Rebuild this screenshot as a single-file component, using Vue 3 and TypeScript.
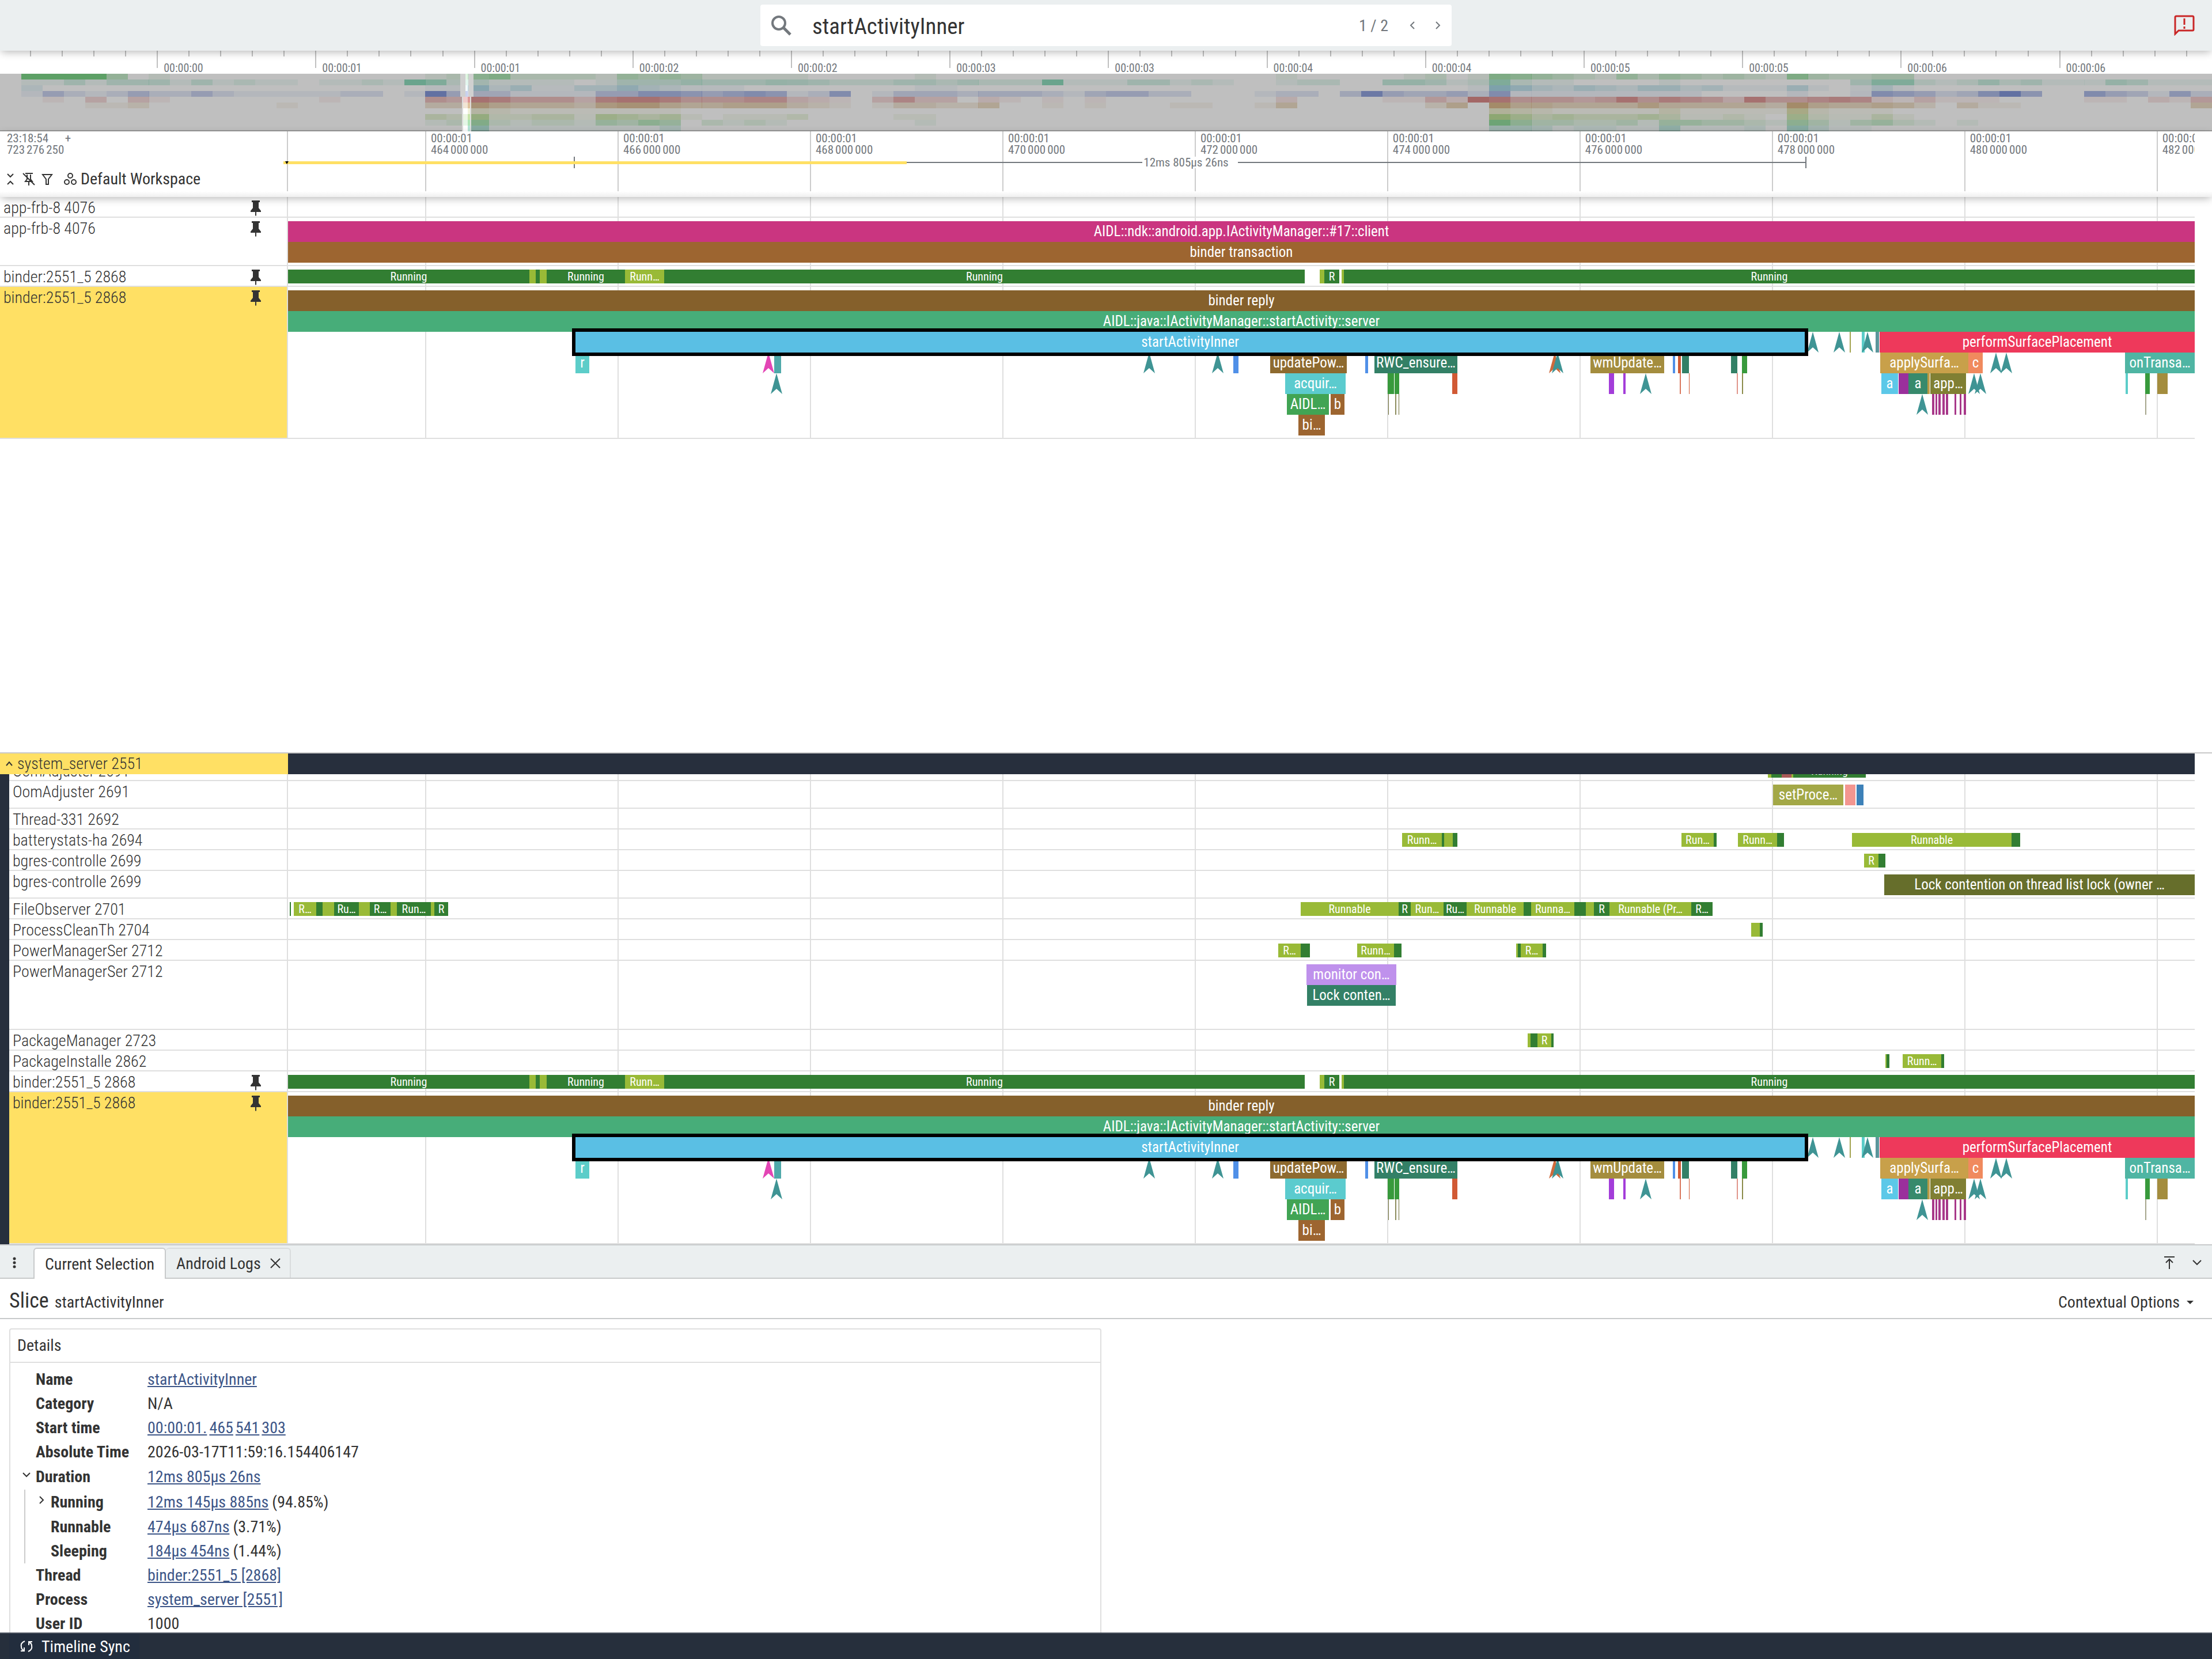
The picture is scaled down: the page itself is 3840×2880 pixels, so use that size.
<script setup lang="ts">
type Kind = 'slice' | 'mark'
interface Slice {
  from: number
  to: number
  color: string
  text?: string
  depth?: number
  kind?: Kind
  selected?: boolean
}
interface Track {
  name: string
  height: number
  state?: boolean
  pinned?: boolean
  selected?: boolean
  slices: Slice[]
}

const LANE_START = 500
const LANE_END = 3810
const lanePct = (x: number): string => ((x - LANE_START) / (LANE_END - LANE_START)) * 100 + '%'
const laneWidth = (w: number): string => (w / (LANE_END - LANE_START)) * 100 + '%'
const pagePct = (x: number): string => (x / 3840) * 100 + '%'

const GREEN = '#327e32'
const LIME = '#99ba37'
const TEAL = '#3f9494'
const BROWN = '#9d6530'
const CYAN = '#5ccdc9'
const FOREST = '#338066'
const LEAF = '#389a3c'
const BLUE = '#5090e8'
const RUST = '#d15a35'

const run = (from: number, to: number, text = ''): Slice => ({ from, to, color: GREEN, text })
const ready = (from: number, to: number, text = ''): Slice => ({ from, to, color: LIME, text })
const bar = (depth: number, from: number, to: number, color: string, text = ''): Slice => ({ depth, from, to, color, text })
const mark = (depth: number, center: number, color = TEAL): Slice => ({ depth, from: center - 10, to: center + 10, color, kind: 'mark' })

const binderStates: Slice[] = [
  run(500, 919, 'Running'), ready(919, 930), run(930, 937), ready(937, 949), run(949, 1085, 'Running'),
  ready(1085, 1153, 'Runn…'), run(1153, 2265, 'Running'), ready(2291, 2299), run(2299, 2325, 'R'),
  ready(2329, 2333), run(2333, 3810, 'Running'),
]

const magenta = [[3354, 4], [3360, 3], [3365, 4], [3372, 4], [3378, 4], [3393, 3], [3402, 3], [3409, 4]]

const binderSlices: Slice[] = [
  bar(0, 500, 3810, '#85602b', 'binder reply'),
  bar(1, 500, 3810, '#47ad79', 'AIDL::java::IActivityManager::startActivity::server'),
  { depth: 2, from: 999, to: 3133, color: '#5abfe4', text: 'startActivityInner', selected: true },
  mark(2, 3147), mark(2, 3193), bar(2, 3211, 3213, '#a3a34f'), bar(2, 3232, 3237, CYAN), mark(2, 3242),
  bar(2, 3256, 3262, '#5b959b'), bar(2, 3263, 3810, '#ee395b', 'performSurfacePlacement'),
  bar(3, 999, 1023, CYAN, 'r'), mark(3, 1334, '#e345b5'), bar(3, 1344, 1356, '#4fa9aa'), mark(4, 1348),
  mark(3, 1995), mark(3, 2114), bar(3, 2141, 2150, BLUE), bar(3, 2205, 2338, '#8e6a2f', 'updatePow…'),
  bar(3, 2370, 2375, BLUE), bar(3, 2386, 2530, FOREST, 'RWC_ensure…'),
  bar(4, 2231, 2336, '#5bcbce', 'acquir…'), bar(4, 2409, 2420, LEAF), bar(4, 2421, 2429, LEAF), bar(4, 2521, 2530, RUST),
  bar(5, 2234, 2307, '#41a454', 'AIDL…'), bar(5, 2310, 2334, BROWN, 'b'),
  bar(5, 2410, 2411, '#6b6b32'), bar(5, 2422, 2424, '#8c8c5c'), bar(5, 2428, 2429, '#6b6b32'),
  bar(6, 2254, 2300, BROWN, 'bi…'),
  mark(3, 2699, '#cf6a3c'), mark(3, 2704), bar(3, 2761, 2889, '#a48d3e', 'wmUpdate…'), bar(3, 2904, 2908, BLUE),
  bar(3, 2913, 2918, RUST), bar(3, 2920, 2932, FOREST), bar(3, 3005, 3016, FOREST), bar(3, 3024, 3033, LEAF),
  bar(3, 3264, 3417, '#c8a04a', 'applySurfa…'), bar(3, 3417, 3442, '#f08a5e', 'c'), mark(3, 3465), mark(3, 3483),
  bar(3, 3689, 3810, '#4fb5a3', 'onTransa…'),
  bar(4, 2793, 2802, '#a33dd9'), bar(4, 2818, 2822, '#a33dd9'), mark(4, 2857), bar(4, 2916, 2918, '#d9775c'),
  bar(4, 2932, 2933, RUST), bar(4, 3015, 3017, '#e0958a'), bar(4, 3024, 3026, '#8c8c4a'),
  bar(4, 3266, 3295, '#5cc8e8', 'a'), bar(4, 3296, 3313, '#9a309c'), bar(4, 3313, 3346, '#378a6c', 'a'),
  bar(4, 3346, 3350, '#b89b45'), bar(4, 3351, 3413, '#807f33', 'app…'), mark(4, 3427), mark(4, 3438),
  bar(4, 3690, 3694, CYAN), bar(4, 3724, 3732, LEAF), bar(4, 3745, 3763, '#a48d3e'),
  mark(5, 3337), bar(5, 3724, 3726, '#a5a58c'),
  ...magenta.map(([x, w]) => bar(5, x, x + w, '#a8388a')),
]

const pinnedTracks: Track[] = [
  { name: 'app-frb-8 4076', height: 36, state: true, pinned: true, slices: [] },
  {
    name: 'app-frb-8 4076', height: 84, pinned: true,
    slices: [
      bar(0, 500, 3810, '#ca3580', 'AIDL::ndk::android.app.IActivityManager::#17::client'),
      bar(1, 500, 3810, BROWN, 'binder transaction'),
    ],
  },
  { name: 'binder:2551_5 2868', height: 36, state: true, pinned: true, slices: binderStates },
  { name: 'binder:2551_5 2868', height: 264, pinned: true, selected: true, slices: binderSlices },
]

const serverTracks: Track[] = [
  {
    name: 'OomAdjuster 2691', height: 36, state: true,
    slices: [ready(3069, 3075), run(3075, 3093), { from: 3093, to: 3110, color: '#a85a58' }, ready(3110, 3113), run(3113, 3239, 'Running')],
  },
  {
    name: 'OomAdjuster 2691', height: 48,
    slices: [bar(0, 3078, 3200, '#a3a847', 'setProce…'), bar(0, 3203, 3221, '#f39690'), bar(0, 3223, 3235, '#3d81b8')],
  },
  { name: 'Thread-331 2692', height: 36, state: true, slices: [] },
  {
    name: 'batterystats-ha 2694', height: 36, state: true,
    slices: [
      ready(2434, 2503, 'Runn…'), run(2503, 2507), ready(2507, 2522), run(2522, 2530), ready(2919, 2975, 'Run…'), run(2975, 2980),
      ready(3017, 3085, 'Runn…'), run(3085, 3097), ready(3215, 3492, 'Runnable'), run(3492, 3507),
    ],
  },
  { name: 'bgres-controlle 2699', height: 36, state: true, slices: [ready(3236, 3261, 'R'), run(3261, 3273)] },
  { name: 'bgres-controlle 2699', height: 48, slices: [bar(0, 3271, 3810, '#666e2b', 'Lock contention on thread list lock (owner …')] },
  {
    name: 'FileObserver 2701', height: 36, state: true,
    slices: [
      run(503, 505), ready(510, 549, 'R…'), run(549, 560), ready(560, 580), run(580, 623, 'Ru…'), ready(623, 642), run(642, 678, 'R…'),
      ready(678, 689), run(689, 748, 'Run…'), ready(748, 754), run(754, 778, 'R'), ready(2258, 2428, 'Runnable'), run(2428, 2449, 'R'),
      ready(2449, 2506, 'Run…'), run(2506, 2546, 'Ru…'), ready(2546, 2645, 'Runnable'), run(2645, 2658), ready(2658, 2733, 'Runna…'),
      run(2733, 2753), ready(2753, 2767), run(2767, 2794, 'R'), ready(2794, 2936, 'Runnable (Pr…'), run(2936, 2973, 'R…'),
    ],
  },
  { name: 'ProcessCleanTh 2704', height: 36, state: true, slices: [ready(3040, 3055), run(3055, 3060)] },
  {
    name: 'PowerManagerSer 2712', height: 36, state: true,
    slices: [
      ready(2219, 2258, 'R…'), run(2258, 2274), ready(2356, 2420, 'Runn…'), run(2420, 2433), ready(2632, 2635), run(2635, 2640),
      ready(2640, 2678, 'R…'), run(2678, 2684),
    ],
  },
  {
    name: 'PowerManagerSer 2712', height: 120,
    slices: [bar(0, 2268, 2424, '#bf91ec', 'monitor con…'), bar(1, 2269, 2423, FOREST, 'Lock conten…')],
  },
  { name: 'PackageManager 2723', height: 36, state: true, slices: [ready(2652, 2657), run(2657, 2669), ready(2669, 2693, 'R'), run(2693, 2697)] },
  { name: 'PackageInstalle 2862', height: 36, state: true, slices: [ready(3273, 3275), run(3275, 3280), ready(3303, 3370, 'Runn…'), run(3370, 3375)] },
  { name: 'binder:2551_5 2868', height: 36, state: true, pinned: true, slices: binderStates },
  { name: 'binder:2551_5 2868', height: 264, pinned: true, selected: true, slices: binderSlices },
]

const panels = [
  { id: 'pinned', tracks: pinnedTracks },
  { id: 'server', tracks: serverTracks },
]

const sliceStyle = (s: Slice, state?: boolean) => ({
  left: lanePct(s.from),
  width: laneWidth(s.to - s.from),
  top: state ? undefined : 6 + (s.depth ?? 0) * 36 + 'px',
  background: s.color,
})

const gridX = Array.from({ length: 10 }, (_, i) => 738 + i * 333.97)
const gridLabels = gridX.map((x, i) => ({ x, ms: String(464 + i * 2) }))

const seconds = ['00', '01', '01', '02', '02', '03', '03', '04', '04', '05', '05', '06', '06']
const overviewTicks = Array.from({ length: 69 }, (_, i) => ({
  x: 52 + i * 55.04,
  label: i % 5 === 4 ? '00:00:' + seconds[(i - 4) / 5] : '',
}))

// CPU load per process row. Each entry is "bucket:levels", one digit from 0 to 9 for each following bucket.
const loadRows: { color: string; load: string }[] = [
  { color: '#7cd688', load: '1:99994 7:1 20:12 22:5622221434311111 43:1 60:1 66:12 69:16543214243232163223 89:3' },
  { color: '#80d6b4', load: '1:1131333131211011218621 22:2111101333433343 37:1322233232228111331210 60:12200443126211 78:1 87:3662124231114311141' },
  { color: '#90cbdc', load: '1:2 20:11 22:6241133532111 43:11 69:175324324423111410131' },
  { color: '#8397d9', load: '1:142124 7:2242111112201 20:94331111 28:4466545651260133323332134422 59:122038433426 71:1111111110 84:1 87:165423695 98:643152' },
  { color: '#da8a89', load: '2:1 4:3 6:31 15:1 20:54 22:87555378875556632103633 46:21 49:1 51:1 60:2 65:11429855545857653855676213111 98:11021 103:4' },
  { color: '#d6b17f', load: '4:112 13:1 20:33 22:7544436775445553210133224 49:1 51:1 55:11 59:14 67:25 70:8554444644444385445420311 103:4' },
  { color: '#d2d48c', load: '22:321111111 31:1 70:4321111131111162111' },
  { color: '#aad67c', load: '20:326223315434101112 42:11 70:753433343112 82:1 84:52113 89:1' },
  { color: '#84d690', load: '20:12621221435402121 43:1 70:85332231443321531342101' },
  { color: '#90d6c4', load: '22:6111111113 70:443122115111206311' },
]
const loadCells = loadRows.map((row) => ({
  color: row.color,
  cells: row.load.split(' ').flatMap((entry) => {
    const [start, levels] = entry.split(':')
    return [...levels].map((d, k) => ({ i: Number(start) + k, alpha: Number(d) / 9 })).filter((c) => c.alpha > 0)
  }),
}))

interface Detail {
  label: string
  parts?: string[]
  plain?: string
  level?: number
  toggle?: 'open' | 'closed'
}
const details: Detail[] = [
  { label: 'Name', parts: ['startActivityInner'] },
  { label: 'Category', plain: 'N/A' },
  { label: 'Start time', parts: ['00:00:01.', '465', '541', '303'] },
  { label: 'Absolute Time', plain: '2026-03-17T11:59:16.154406147' },
  { label: 'Duration', parts: ['12ms 805µs 26ns'], toggle: 'open' },
  { label: 'Running', parts: ['12ms 145µs 885ns'], plain: '(94.85%)', level: 1, toggle: 'closed' },
  { label: 'Runnable', parts: ['474µs 687ns'], plain: '(3.71%)', level: 1 },
  { label: 'Sleeping', parts: ['184µs 454ns'], plain: '(1.44%)', level: 1 },
  { label: 'Thread', parts: ['binder:2551_5 [2868]'] },
  { label: 'Process', parts: ['system_server [2551]'] },
  { label: 'User ID', plain: '1000' },
]
</script>

<template>
  <div class="app">
    <header class="topbar">
      <label class="omnibox">
        <svg class="search" viewBox="0 0 36 36"><circle cx="14" cy="14" r="11" fill="none" stroke="currentColor" stroke-width="4" /><path d="M21 21 34 34" stroke="currentColor" stroke-width="5" /></svg>
        <input class="query" type="text" value="startActivityInner" aria-label="Search" />
        <span class="hits">1 / 2</span>
        <button class="step" type="button" aria-label="Previous result"><svg viewBox="0 0 14 18"><path d="M10 3 4 9l6 6" /></svg></button>
        <button class="step" type="button" aria-label="Next result"><svg viewBox="0 0 14 18"><path d="m4 3 6 6-6 6" /></svg></button>
      </label>
      <button class="alert" type="button" aria-label="Errors">
        <svg viewBox="0 0 36 36"><path d="M2 33V4q0-2 2-2h28q2 0 2 2v21q0 2-2 2H8Z" fill="none" stroke="#c92626" stroke-width="3" /><path d="M18 6v11M18 20v4" stroke="#c92626" stroke-width="3" /></svg>
      </button>
    </header>

    <section class="overview">
      <div class="ruler">
        <div v-for="t in overviewTicks" :key="t.x" class="tick" :class="{ major: t.label }" :style="{ left: pagePct(t.x) }">
          <span v-if="t.label">{{ t.label }}</span>
        </div>
      </div>
      <div class="minimap">
        <div v-for="row in loadCells" :key="row.color" class="load">
          <i v-for="c in row.cells" :key="c.i" :style="{ left: pagePct(c.i * 36.923), background: row.color, opacity: c.alpha }"></i>
        </div>
        <div class="shade" :style="{ left: '0', width: pagePct(803) }"></div>
        <div class="shade" :style="{ left: pagePct(818), right: '0' }"></div>
        <div class="handle" :style="{ left: pagePct(799) }"></div>
        <div class="handle" :style="{ left: pagePct(813) }"></div>
        <div class="rim" :style="{ left: pagePct(802) }"></div>
        <div class="rim" :style="{ left: pagePct(816) }"></div>
      </div>
    </section>

    <section class="axis">
      <div class="corner">
        <div class="stamp">
          <p>23:18:54 <b>+</b></p>
          <p class="nanos"><span>723</span><span>276</span><span>250</span></p>
        </div>
        <div class="tools">
          <button type="button" aria-label="Collapse all"><svg viewBox="0 0 24 24"><path d="m7 3 5 5 5-5M7 21l5-5 5 5" /></svg></button>
          <button type="button" aria-label="Clear pinned"><svg viewBox="0 0 24 24"><path d="M6 2h13M9 4v8l-3 4h12l-3-4V4M12 16v7M2 2l20 20" /></svg></button>
          <button type="button" aria-label="Filter"><svg viewBox="0 0 24 24"><path d="M4 4h16l-6 8v9h-4v-9Z" /></svg></button>
          <button type="button" class="workspace">
            <svg viewBox="0 0 24 24"><circle cx="12" cy="6" r="4" /><circle cx="6" cy="17" r="4" /><circle cx="18" cy="17" r="4" /></svg>
            Default Workspace
          </button>
        </div>
      </div>
      <div class="scale">
        <div v-for="g in gridLabels" :key="g.ms" class="gridmark" :style="{ left: lanePct(g.x) }">
          <p>00:00:01</p>
          <p class="nanos"><span>{{ g.ms }}</span><span>000</span><span>000</span></p>
        </div>
      </div>
      <div class="span">
        <div class="spanline" :style="{ left: lanePct(996), width: laneWidth(2140) }"><span>12ms 805µs 26ns</span></div>
        <div class="spanhot" :style="{ width: laneWidth(1082) }"></div>
        <div class="cursor"></div>
      </div>
      <div class="gutter"></div>
    </section>

    <main v-for="panel in panels" :key="panel.id" class="panel" :class="panel.id">
      <div v-if="panel.id === 'server'" class="group">
        <div class="grouphead">
          <svg viewBox="0 0 16 16"><path d="m3 11 5-6 5 6" /></svg>
          system_server 2551
        </div>
        <div class="groupfill"></div>
      </div>
      <div class="viewport">
        <div class="tracks">
          <div class="grid"><i v-for="x in gridX" :key="x" :style="{ left: lanePct(x) }"></i></div>
          <div v-for="(t, ti) in panel.tracks" :key="ti" class="track" :class="{ selected: t.selected }" :style="{ height: t.height + 'px' }">
            <div class="name">
              <span>{{ t.name }}</span>
              <svg v-if="t.pinned" class="pin" viewBox="0 0 24 28"><path d="M5 1h14v3h-2v10l4 5v2h-8v6l-1 1-1-1v-6H3v-2l4-5V4H5Z" /></svg>
            </div>
            <div class="lane" :class="{ state: t.state }">
              <div v-for="(s, si) in t.slices" :key="si" class="slice" :class="{ mark: s.kind === 'mark', picked: s.selected }" :style="sliceStyle(s, t.state)">{{ s.text }}</div>
            </div>
          </div>
        </div>
      </div>
    </main>

    <section class="drawer">
      <nav class="tabs">
        <button class="kebab" type="button" aria-label="Tab menu"><svg viewBox="0 0 6 20"><circle cx="3" cy="3" r="2.5" /><circle cx="3" cy="10" r="2.5" /><circle cx="3" cy="17" r="2.5" /></svg></button>
        <button class="tab active" type="button">Current Selection</button>
        <button class="tab" type="button">Android Logs <svg viewBox="0 0 18 18"><path d="m1 1 16 16M17 1 1 17" /></svg></button>
        <span class="spacer"></span>
        <button class="drawerbtn" type="button" aria-label="Expand"><svg viewBox="0 0 24 24"><path d="M3 2h18M12 23V7M6 12l6-6 6 6" /></svg></button>
        <button class="drawerbtn" type="button" aria-label="Collapse"><svg viewBox="0 0 24 24"><path d="m5 8 7 7 7-7" /></svg></button>
      </nav>
      <div class="title">
        <h1>Slice</h1>
        <span>startActivityInner</span>
        <button type="button">Contextual Options <i class="caret"></i></button>
      </div>
      <div class="body">
        <article class="card">
          <h2>Details</h2>
          <table>
            <tbody>
              <tr v-for="d in details" :key="d.label" :class="{ child: d.level, tall: d.toggle }">
                <th scope="row">
                  <svg v-if="d.toggle" class="toggle" viewBox="0 0 16 16"><path :d="d.toggle === 'open' ? 'm2 5 6 6 6-6' : 'm5 2 6 6-6 6'" /></svg>
                  {{ d.label }}
                </th>
                <td>
                  <a v-if="d.parts" href="#"><span v-for="p in d.parts" :key="p">{{ p }}</span></a>
                  <span v-if="d.plain">{{ d.plain }}</span>
                </td>
              </tr>
            </tbody>
          </table>
        </article>
      </div>
    </section>

    <footer class="status">
      <button type="button">
        <svg viewBox="0 0 24 24"><path d="M9 3C4 5 2 9 3 13c0 3 2 5 4 6M2 20h6v-6M15 21c5-2 7-6 6-10 0-3-2-5-4-6M22 4h-6v6" /></svg>
        Timeline Sync
      </button>
    </footer>
  </div>
</template>

<style>
body {
  margin: 0;
}
</style>

<style scoped>
.app {
  display: flex;
  flex-direction: column;
  height: 100vh;
  overflow: hidden;
  background: #fff;
  color: #333;
  font-family: "Roboto Condensed", "Liberation Sans Narrow", Roboto, sans-serif;
  font-size: 28px;
}
.app * {
  box-sizing: border-box;
}
button {
  font: inherit;
  color: inherit;
  background: none;
  border: 0;
  padding: 0;
  display: flex;
  align-items: center;
}
svg {
  display: block;
  flex: none;
  fill: none;
  stroke: currentColor;
}
p {
  margin: 0;
}

.topbar {
  position: relative;
  z-index: 3;
  flex: none;
  display: flex;
  align-items: center;
  justify-content: center;
  height: 88px;
  background: #ebeff0;
  box-shadow: 0 4px 14px -2px rgba(0, 0, 0, 0.3);
}
.omnibox {
  display: flex;
  align-items: center;
  width: 1200px;
  height: 72px;
  padding: 0 2px 0 18px;
  border-radius: 4px;
  background: #fff;
  color: #73787d;
}
.search {
  width: 36px;
  height: 36px;
}
.query {
  flex: 1;
  min-width: 0;
  margin: 0 0 0 36px;
  padding: 4px 0 0;
  border: 0;
  outline: 0;
  background: none;
  color: #333;
  font: inherit;
  font-size: 39px;
}
.hits {
  margin-right: 20px;
}
.step {
  width: 44px;
  justify-content: center;
}
.step svg {
  width: 14px;
  height: 18px;
  stroke-width: 2;
}
.alert {
  position: absolute;
  right: 30px;
}
.alert svg {
  width: 36px;
  height: 36px;
}

.overview {
  flex: none;
  color: #73787d;
}
.ruler {
  position: relative;
  height: 40px;
  font-size: 20px;
  line-height: 20px;
}
.tick {
  position: absolute;
  top: 0;
  width: 2px;
  height: 10px;
  background: #c0c0c0;
}
.tick.major {
  height: 30px;
}
.tick span {
  position: absolute;
  left: 12px;
  top: 20px;
}
.minimap {
  position: relative;
  height: 100px;
  background: #fff;
}
.load {
  position: relative;
  height: 10px;
}
.load i {
  position: absolute;
  top: 0;
  width: 37px;
  height: 10px;
}
.shade {
  position: absolute;
  top: 0;
  bottom: 0;
  background: rgba(0, 0, 0, 0.25);
  border-bottom: 2px solid rgba(0, 0, 0, 0.2);
}
.handle {
  position: absolute;
  top: 0;
  width: 9px;
  height: 40px;
  background: #d0d0d0;
}
.rim {
  position: absolute;
  top: 40px;
  bottom: 0;
  width: 2px;
  background: #dcdcdc;
}

.axis {
  position: relative;
  z-index: 2;
  flex: none;
  display: flex;
  height: 114px;
  padding-bottom: 10px;
  background: linear-gradient(#fff 104px, #efefef);
  box-shadow: 0 4px 14px -2px rgba(0, 0, 0, 0.3);
  color: #73787d;
  font-size: 21px;
  line-height: 20px;
}
.corner {
  flex: none;
  display: flex;
  flex-direction: column;
  justify-content: space-between;
  width: 500px;
  border-right: 2px solid #ccc;
}
.stamp {
  padding: 2px 12px;
}
.stamp b {
  margin-left: 24px;
  font-weight: 400;
}
.nanos {
  display: flex;
  gap: 3px;
}
.tools {
  display: flex;
  align-items: center;
  gap: 8px;
  padding: 0 6px 3px;
  color: #333;
  font-size: 28px;
  line-height: 36px;
}
.tools svg {
  width: 24px;
  height: 24px;
  stroke-width: 2;
}
.workspace {
  gap: 6px;
  margin-left: 8px;
}
.scale {
  position: relative;
  flex: 1;
  overflow: hidden;
}
.gridmark {
  position: absolute;
  top: 0;
  bottom: 0;
  padding: 2px 8px;
  border-left: 2px solid #ccc;
}
.span {
  position: absolute;
  left: 500px;
  right: 30px;
  top: 44px;
  height: 20px;
}
.spanline {
  position: absolute;
  top: 0;
  display: flex;
  align-items: center;
  justify-content: center;
  height: 20px;
  border: solid #73787d;
  border-width: 0 2px;
}
.spanline::before,
.spanline::after {
  content: "";
  flex: 1;
  height: 2px;
  background: #73787d;
}
.spanline span {
  padding: 0 16px 0 2px;
  background: #fff;
}
.spanhot {
  position: absolute;
  left: -8px;
  top: 8px;
  height: 5px;
  background: #ffe064;
}
.cursor {
  position: absolute;
  left: -5px;
  top: 8px;
  border: solid transparent;
  border-width: 5px 3px 0;
  border-top-color: #000;
}
.gutter {
  flex: none;
  width: 30px;
}

.panel {
  position: relative;
}
.pinned {
  flex: 1;
  min-height: 0;
  overflow: hidden;
}
.server {
  flex: none;
  border-top: 2px solid #c8c8c8;
}
.group {
  display: flex;
  height: 36px;
  padding-right: 30px;
  line-height: 36px;
}
.grouphead {
  display: flex;
  align-items: center;
  gap: 6px;
  width: 500px;
  padding-left: 8px;
  background: #ffe064;
  font-weight: 300;
}
.grouphead svg {
  width: 16px;
  height: 16px;
  stroke-width: 2;
}
.groupfill {
  flex: 1;
  background: #272f3d;
}
.viewport {
  overflow: hidden;
}
.tracks {
  position: relative;
}
.server .tracks {
  margin-top: -24px;
  border-left: 16px solid #272f3d;
}
.grid {
  position: absolute;
  left: 500px;
  right: 30px;
  top: 0;
  bottom: 0;
}
.server .grid {
  left: 484px;
}
.grid i {
  position: absolute;
  top: 0;
  bottom: 0;
  width: 2px;
  background: #dfdfdf;
}
.track {
  display: flex;
  position: relative;
  margin-right: 30px;
  border-bottom: 2px solid #dfdfdf;
}
.name {
  flex: none;
  display: flex;
  justify-content: space-between;
  width: 500px;
  padding: 0 42px 0 6px;
  border-right: 2px solid #dfdfdf;
  font-weight: 300;
  line-height: 38px;
}
.server .name {
  width: 484px;
}
.selected .name {
  background: #ffe064;
}
.pin {
  width: 24px;
  height: 28px;
  margin-top: 5px;
  fill: #333;
  stroke: none;
}
.lane {
  position: relative;
  flex: 1;
}
.slice {
  position: absolute;
  height: 36px;
  overflow: hidden;
  color: #fff;
  font-size: 25px;
  line-height: 36px;
  text-align: center;
  white-space: nowrap;
}
.state .slice {
  top: 6px;
  height: 24px;
  font-size: 20px;
  line-height: 24px;
}
.mark {
  clip-path: polygon(50% 0, 100% 100%, 50% 75%, 0 100%);
}
.picked {
  z-index: 1;
  outline: 6px solid #000;
}

.drawer {
  flex: none;
  display: flex;
  flex-direction: column;
  height: 674px;
  overflow: hidden;
  border-top: 2px solid #c8cacb;
}
.tabs {
  flex: none;
  display: flex;
  height: 58px;
  padding: 4px 2px 0 22px;
  border-bottom: 2px solid #c8cacb;
  background: #ebeff0;
}
.kebab {
  width: 36px;
}
.kebab svg {
  width: 6px;
  height: 20px;
  fill: #333;
  stroke: none;
}
.tab {
  gap: 16px;
  padding: 0 16px 0 18px;
  border: 2px solid #d9dcdd;
  border-bottom: 0;
  border-left-width: 0;
  border-radius: 6px 6px 0 0;
}
.tab.active {
  height: 54px;
  padding: 0 18px;
  border-color: #c8cacb;
  border-left-width: 2px;
  background: #fff;
}
.tab svg {
  width: 18px;
  height: 18px;
  stroke-width: 2;
}
.spacer {
  flex: 1;
}
.drawerbtn {
  width: 48px;
  justify-content: center;
}
.drawerbtn svg {
  width: 24px;
  height: 24px;
  stroke-width: 2;
}
.title {
  flex: none;
  display: flex;
  align-items: baseline;
  height: 70px;
  padding: 0 32px 0 16px;
  border-bottom: 2px solid #c8cacb;
  line-height: 76px;
}
.title h1 {
  margin: 0 10px 0 0;
  font-size: 36px;
  font-weight: 400;
}
.title button {
  margin-left: auto;
  gap: 12px;
}
.caret {
  border: 6px solid transparent;
  border-top-color: #333;
  border-bottom: 0;
}
.body {
  flex: 1;
  min-height: 0;
  padding: 16px;
}
.card {
  width: calc(50% - 8px);
  border: 2px solid #dfdfdf;
  border-radius: 4px;
}
.card h2 {
  margin: 0;
  padding: 0 12px;
  border-bottom: 2px solid #dfdfdf;
  font-size: 28px;
  font-weight: 400;
  line-height: 56px;
}
table {
  margin-top: 8px;
  border-spacing: 0;
}
tr {
  height: 42px;
}
tr.tall {
  height: 44px;
}
th,
td {
  padding: 0;
  line-height: 42px;
  text-align: left;
  white-space: nowrap;
}
th {
  position: relative;
  width: 238px;
  padding-left: 44px;
}
.child th {
  padding-left: 70px;
}
.child th::before {
  content: "";
  position: absolute;
  left: 24px;
  top: 0;
  bottom: 0;
  border-left: 2px solid #ccc;
}
.toggle {
  position: absolute;
  left: 20px;
  top: 10px;
  width: 16px;
  height: 16px;
  stroke-width: 2;
}
.child .toggle {
  left: 46px;
}
a {
  display: inline-flex;
  gap: 4px;
  margin-right: 6px;
  color: #3d5688;
  text-decoration: none;
}
a span {
  text-decoration: underline;
}

.status {
  flex: none;
  display: flex;
  height: 46px;
  padding-left: 16px;
  border-top: 2px solid #4a515d;
  background: #262f3c;
  color: #fff;
}
.status button {
  gap: 14px;
  padding: 0 16px 0 18px;
  background: #222d3d;
}
.status svg {
  width: 24px;
  height: 24px;
  stroke-width: 2;
}
</style>
